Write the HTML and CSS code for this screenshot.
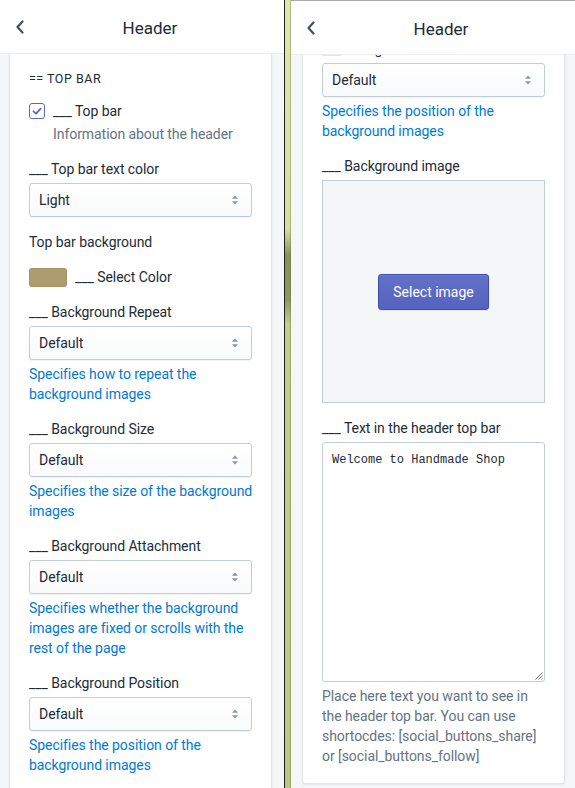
FILE: index.html
```html
<!DOCTYPE html>
<html lang="en">
<head>
<meta charset="utf-8">
<title>Header settings</title>
<link rel="stylesheet" href="styles.css">
</head>
<body>
<div class="screen">
  <section class="panel panel--left">
    <header class="topbar">
      <svg class="back" width="10" height="14" viewBox="0 0 10 14"><path d="M7.5 1.5 2.5 7l5 5.5" fill="none" stroke="#454f5b" stroke-width="2.2" stroke-linecap="round" stroke-linejoin="round"/></svg>
      <h1 class="title">Header</h1>
    </header>
    <div class="body">
      <div class="card card--left">
        <div class="subheading">== TOP BAR</div>
        <div class="check-group">
          <div class="check-row">
            <span class="checkbox"><svg width="14" height="14" viewBox="0 0 14 14"><path d="M3.5 7.3 6 9.7 10.6 4.6" fill="none" stroke="#5c6ac4" stroke-width="1.8" stroke-linecap="round" stroke-linejoin="round"/></svg></span>
            <span>___ Top bar</span>
          </div>
          <p class="hint">Information about the header</p>
        </div>
        <div class="field">
          <div class="label">___ Top bar text color</div>
          <div class="select"><span>Light</span><svg class="arrows" width="8" height="12" viewBox="0 0 8 12"><path d="M4 1.5 7 4.8H1z M4 10.5 1 7.2h6z" fill="#8a96a3"/></svg></div>
        </div>
        <div class="plain">Top bar background</div>
        <div class="color-row"><span class="swatch"></span><span>___ Select Color</span></div>
        <div class="field">
          <div class="label">___ Background Repeat</div>
          <div class="select"><span>Default</span><svg class="arrows" width="8" height="12" viewBox="0 0 8 12"><path d="M4 1.5 7 4.8H1z M4 10.5 1 7.2h6z" fill="#8a96a3"/></svg></div>
          <p class="help">Specifies how to repeat the background images</p>
        </div>
        <div class="field">
          <div class="label">___ Background Size</div>
          <div class="select"><span>Default</span><svg class="arrows" width="8" height="12" viewBox="0 0 8 12"><path d="M4 1.5 7 4.8H1z M4 10.5 1 7.2h6z" fill="#8a96a3"/></svg></div>
          <p class="help">Specifies the size of the background images</p>
        </div>
        <div class="field">
          <div class="label">___ Background Attachment</div>
          <div class="select"><span>Default</span><svg class="arrows" width="8" height="12" viewBox="0 0 8 12"><path d="M4 1.5 7 4.8H1z M4 10.5 1 7.2h6z" fill="#8a96a3"/></svg></div>
          <p class="help">Specifies whether the background images are fixed or scrolls with the rest of the page</p>
        </div>
        <div class="field">
          <div class="label">___ Background Position</div>
          <div class="select"><span>Default</span><svg class="arrows" width="8" height="12" viewBox="0 0 8 12"><path d="M4 1.5 7 4.8H1z M4 10.5 1 7.2h6z" fill="#8a96a3"/></svg></div>
          <p class="help">Specifies the position of the background images</p>
        </div>
      </div>
    </div>
  </section>

  <div class="divider"></div>

  <section class="panel panel--right">
    <header class="topbar">
      <svg class="back" width="10" height="14" viewBox="0 0 10 14"><path d="M7.5 1.5 2.5 7l5 5.5" fill="none" stroke="#454f5b" stroke-width="2.2" stroke-linecap="round" stroke-linejoin="round"/></svg>
      <h1 class="title">Header</h1>
    </header>
    <div class="body">
      <div class="card card--right">
        <div class="field">
          <div class="label">___ Background Position</div>
          <div class="select"><span>Default</span><svg class="arrows" width="8" height="12" viewBox="0 0 8 12"><path d="M4 1.5 7 4.8H1z M4 10.5 1 7.2h6z" fill="#8a96a3"/></svg></div>
          <p class="help">Specifies the position of the background images</p>
        </div>
        <div class="field">
          <div class="label">___ Background image</div>
          <div class="image-box"><button class="btn-primary" type="button">Select image</button></div>
        </div>
        <div class="field">
          <div class="label">___ Text in the header top bar</div>
          <div class="textarea">Welcome to Handmade Shop<svg class="grip" width="9" height="9" viewBox="0 0 9 9"><path d="M8.5 1.5 1.5 8.5M8.5 4.5 4.5 8.5M8.5 7.5 7.5 8.5" stroke="#6b6b6b" stroke-width="1"/></svg></div>
          <p class="note">Place here text you want to see in the header top bar. You can use shortocdes: [social_buttons_share] or [social_buttons_follow]</p>
        </div>
      </div>
    </div>
  </section>
</div>
</body>
</html>
```

FILE: styles.css
```css
* { box-sizing: border-box; }

html, body {
  margin: 0;
  padding: 0;
  background: #f4f6f8;
}

body {
  font-family: Roboto, "Liberation Sans", sans-serif;
  font-size: 14px;
  line-height: 20px;
  letter-spacing: -0.06px;
  color: #212b36;
}

.screen {
  display: flex;
  width: 575px;
  height: 788px;
  overflow: hidden;
}

.panel {
  display: flex;
  flex-direction: column;
  height: 788px;
  background: #f4f6f8;
  overflow: hidden;
}

.panel--left {
  width: 284px;
  flex: none;
}

.panel--right {
  flex: 1;
  border-top: 1px solid #a9a9a9;
}

.divider {
  flex: none;
  width: 7px;
  border-left: 1px solid #1f1f1c;
  background: linear-gradient(to bottom, #dfe6af 0, #d6de9f 230px, #86925c 255px, #8c9862 300px, #c3ce8b 325px, #bcc784 788px);
  box-shadow: inset -1px 0 0 rgba(90, 100, 60, 0.35);
}

.topbar {
  position: relative;
  flex: none;
  height: 54px;
  background: #fff;
  border-bottom: 1px solid #ebeef0;
  display: flex;
  align-items: center;
  padding: 2px 0 0 15px;
}

.back {
  flex: none;
  margin-top: -2px;
}

.title {
  flex: 1;
  margin: 0 0 0 -25px;
  padding-left: 16px;
  text-align: center;
  font-size: 17px;
  font-weight: 400;
  line-height: 20px;
  letter-spacing: 0;
  color: #212b36;
}

.body {
  flex: 1;
  overflow: hidden;
}

.card {
  width: 263px;
  background: #fff;
  border: 1px solid #e1e5e9;
  border-radius: 3px;
  box-shadow: 0 1px 2px rgba(63, 63, 68, 0.08);
  padding: 19px 19px 17px;
  display: flex;
  flex-direction: column;
  gap: 15px;
}

.card--left {
  margin: -5px 0 0 9px;
  padding-top: 20px;
}

.card--right {
  margin: -36px 0 0 11px;
}

.subheading {
  font-size: 12.5px;
  line-height: 16px;
  letter-spacing: 0.5px;
  text-transform: uppercase;
  padding-top: 1px;
  margin-bottom: -1px;
}

.check-group {
  display: flex;
  flex-direction: column;
  gap: 3px;
}

.check-row {
  display: flex;
  align-items: center;
  gap: 8px;
}

.checkbox {
  width: 16px;
  height: 16px;
  border: 1.5px solid #5c6ac4;
  border-radius: 3px;
  background: #fff;
  display: flex;
  align-items: center;
  justify-content: center;
}

.hint {
  margin: 0 0 0 24px;
  color: #637381;
}

.field {
  display: flex;
  flex-direction: column;
  gap: 4px;
}

.select {
  position: relative;
  height: 34px;
  display: flex;
  align-items: center;
  padding: 0 9px;
  border: 1px solid #c4cdd5;
  border-radius: 3px;
  background: linear-gradient(to bottom, #fff, #f9fafb);
  box-shadow: 0 1px 0 rgba(22, 29, 37, 0.05);
}

.arrows {
  position: absolute;
  right: 12px;
  top: 10px;
}

.plain { margin: 0; }

.color-row {
  display: flex;
  align-items: center;
  gap: 8px;
  height: 20px;
}

.swatch {
  width: 38px;
  height: 19px;
  border-radius: 3px;
  background: #ad9d6e;
  box-shadow: inset 0 0 0 1px rgba(0, 0, 0, 0.06);
}

.help {
  margin: 0 -8px 0 0;
  color: #007ace;
}

.note {
  margin: 0;
  color: #637381;
}

.image-box {
  height: 223px;
  background: #f4f6f8;
  border: 1px solid #c4cdd5;
  display: flex;
  align-items: center;
  justify-content: center;
}

.btn-primary {
  width: 111px;
  height: 36px;
  padding: 0;
  font: inherit;
  color: #fff;
  background: linear-gradient(to bottom, #6371c7, #5563c1);
  border: 1px solid #3f4eae;
  border-radius: 3px;
  box-shadow: inset 0 1px 0 0 #6f7bcb, 0 1px 0 rgba(22, 29, 37, 0.05);
  margin-top: 1px;
}

.textarea {
  position: relative;
  height: 240px;
  border: 1px solid #c4cdd5;
  border-radius: 3px;
  background: #fff;
  padding: 7px 9px;
  font-family: "Liberation Mono", monospace;
  font-size: 12px;
  line-height: 20px;
  letter-spacing: 0;
  color: #212b36;
}

.grip {
  position: absolute;
  right: 1px;
  bottom: 1px;
}
```
